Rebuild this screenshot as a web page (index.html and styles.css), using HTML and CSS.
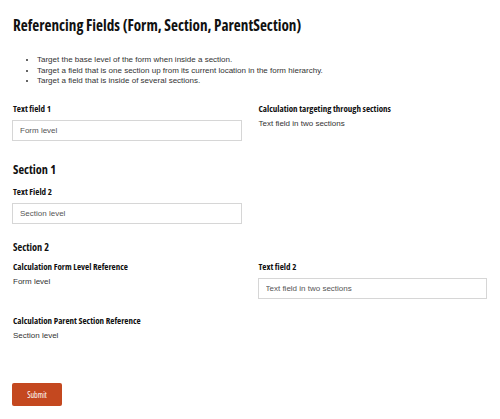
FILE: index.html
```html
<!DOCTYPE html>
<html lang="en">

<head>
    <meta charset="UTF-8">
    <meta name="viewport" content="width=device-width, initial-scale=1.0">
    <title>Referencing Fields</title>
    <link rel="stylesheet" href="styles.css">
</head>

<body>
    <form class="formArea" onsubmit="return false">
        <h1 class="formTitle">Referencing Fields (Form, Section, ParentSection)</h1>
        <ul class="descList">
            <li>Target the base level of the form when inside a section.</li>
            <li>Target a field that is one section up from its current location in the form hierarchy.</li>
            <li>Target a field that is inside of several sections.</li>
        </ul>

        <div class="row">
            <div class="field">
                <label class="fieldLabel">Text field 1</label>
                <input class="textInput" type="text" value="Form level">
            </div>
            <div class="field">
                <label class="fieldLabel">Calculation targeting through sections</label>
                <p class="calcValue">Text field in two sections</p>
            </div>
        </div>

        <!-- section 1 -->
        <h2 class="sectionTitle">Section 1</h2>
        <div class="row">
            <div class="field">
                <label class="fieldLabel">Text Field 2</label>
                <input class="textInput" type="text" value="Section level">
            </div>
        </div>

        <!-- section 2 -->
        <h3 class="subSectionTitle">Section 2</h3>
        <div class="row">
            <div class="field">
                <label class="fieldLabel">Calculation Form Level Reference</label>
                <p class="calcValue">Form level</p>
            </div>
            <div class="field">
                <label class="fieldLabel">Text field 2</label>
                <input class="textInput" type="text" value="Text field in two sections">
            </div>
        </div>
        <div class="row">
            <div class="field">
                <label class="fieldLabel">Calculation Parent Section Reference</label>
                <p class="calcValue">Section level</p>
            </div>
        </div>

        <button class="submitBtn" type="submit">Submit</button>
    </form>
</body>

</html>
```

FILE: styles.css
```css
body {
    margin: 0;
    background-color: #ffffff;
    font-family: "Liberation Sans", Arial, sans-serif;
    color: #333333;
}

.formArea {
    padding: 11px 13px 0 12px;
}

.formTitle,
.sectionTitle,
.subSectionTitle,
.fieldLabel,
.submitBtn {
    font-family: "Open Sans", sans-serif;
    font-stretch: 75%;
    font-weight: 700;
    color: #111111;
}

.formTitle {
    margin: 0 0 0 1px;
    font-size: 15.2px;
    line-height: 28px;
}

.descList {
    margin: 16px 0 0 0;
    padding-left: 25px;
    font-size: 8px;
    line-height: 10.5px;
}

.row {
    display: grid;
    grid-template-columns: 1fr 1fr;
    column-gap: 16px;
    margin-top: 15px;
}

.sectionTitle + .row,
.subSectionTitle + .row {
    margin-top: 5px;
}

.field {
    display: flex;
    flex-direction: column;
}

.fieldLabel {
    display: block;
    margin-left: 1px;
    font-size: 9px;
    line-height: 14px;
}

.textInput {
    margin-top: 4px;
    height: 21px;
    box-sizing: border-box;
    border: 1px solid #d6d6d6;
    padding: 0 7px;
    font-family: "Liberation Sans", Arial, sans-serif;
    font-size: 8px;
    color: #555555;
}

.calcValue {
    margin: 2px 0 0 1px;
    font-size: 8px;
    line-height: 12px;
}

.sectionTitle {
    margin: 19px 0 0 1px;
    font-size: 12.3px;
    line-height: 20px;
}

.subSectionTitle {
    margin: 15px 0 0 1px;
    font-size: 10.3px;
    line-height: 16px;
}

.submitBtn {
    margin-top: 41px;
    width: 50px;
    height: 23px;
    border: none;
    border-radius: 2px;
    background-color: #c4481f;
    color: #ffffff;
    font-size: 8px;
    font-weight: 400;
}
```
